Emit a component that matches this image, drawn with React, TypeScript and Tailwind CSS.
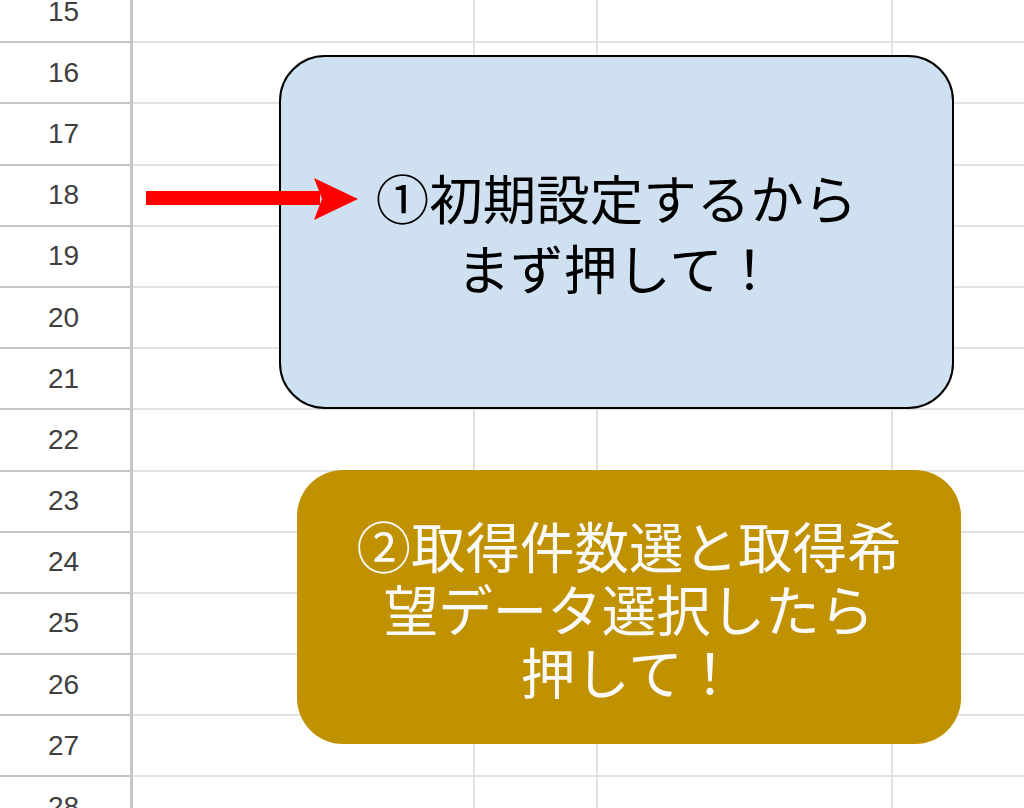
const rows = [15, 16, 17, 18, 19, 20, 21, 22, 23, 24, 25, 26, 27, 28];

const SheetRow = ({ n }: { n: number }) => (
  <div className="flex h-[61.2px] shrink-0">
    <div className="w-[133px] shrink-0 border-b-2 border-r-[3px] border-[#c6c6c6] flex items-center justify-center pr-[3px] text-[28px] text-[#3f3f3f] font-['Liberation_Sans',Arial,sans-serif]">
      {n}
    </div>
    <div className="flex flex-1 border-b-2 border-[#e2e2e2]">
      <div className="w-[342px] border-r-2 border-[#e2e2e2]" />
      <div className="w-[123px] border-r-2 border-[#e2e2e2]" />
      <div className="w-[295px] border-r-2 border-[#e2e2e2]" />
      <div className="flex-1" />
    </div>
  </div>
);

export default function App() {
  return (
    <div className="relative w-[1024px] h-[808px] overflow-hidden bg-white font-['Noto_Sans_CJK_JP',sans-serif]">
      <div className="flex flex-col -mt-[18px]">
        {rows.map((n) => (
          <SheetRow key={n} n={n} />
        ))}
      </div>

      {/* drawing layer over the sheet */}
      <div className="absolute left-[279px] top-[55px] w-[675px] h-[354px] rounded-[46px] border-2 border-black bg-[#cfe0f1] flex items-center justify-center text-center text-[53.5px] leading-[70px] text-black">
        <div>
          ①初期設定するから
          <br />
          まず押して！
        </div>
      </div>

      <div className="absolute left-[297px] top-[470px] w-[664px] h-[274px] rounded-[46px] bg-[#c09100] flex items-center justify-center text-center text-[54.5px] leading-[63px] text-[#fafafa]">
        <div>
          ②取得件数選と取得希
          <br />
          望データ選択したら
          <br />
          押して！
        </div>
      </div>

      <svg className="absolute left-[146px] top-[177px]" width="214" height="44" viewBox="0 0 214 44">
        <rect x="0" y="14" width="174" height="14" fill="#ff0000" />
        <polygon points="168,1 212,22 168,43 176,22" fill="#ff0000" />
      </svg>
    </div>
  );
}
